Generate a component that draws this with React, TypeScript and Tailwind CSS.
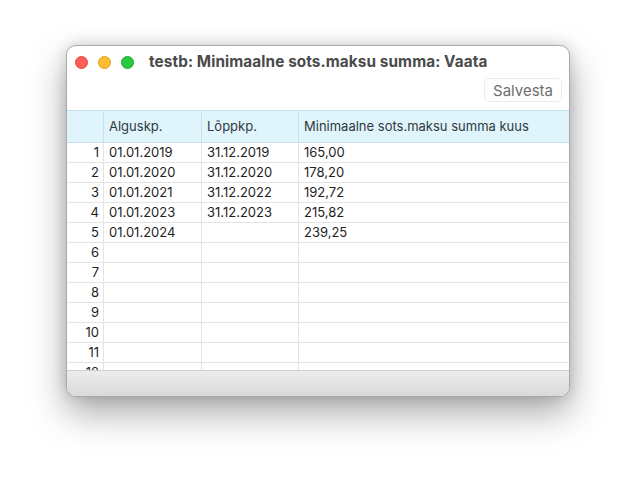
import React from "react";

const rows: [string, string, string][] = [
  ["01.01.2019", "31.12.2019", "165,00"],
  ["01.01.2020", "31.12.2020", "178,20"],
  ["01.01.2021", "31.12.2022", "192,72"],
  ["01.01.2023", "31.12.2023", "215,82"],
  ["01.01.2024", "", "239,25"],
  ["", "", ""],
  ["", "", ""],
  ["", "", ""],
  ["", "", ""],
  ["", "", ""],
  ["", "", ""],
  ["", "", ""],
];

export default function App() {
  return (
    <div
      className="w-[636px] h-[484px] bg-white pt-[45px] pl-[66px]"
      style={{ fontFamily: "Inter, 'Liberation Sans', sans-serif" }}
    >
      <div className="w-[504px] h-[352px] rounded-[10px] bg-white overflow-hidden flex flex-col border border-[#a9a9a9] shadow-[0_16px_36px_rgba(0,0,0,0.34),0_0_14px_rgba(0,0,0,0.14)]">
        {/* title bar */}
        <div className="h-[32px] flex items-center pl-[8px] shrink-0">
          <div className="flex items-center gap-[10px]">
            <span className="w-[13px] h-[13px] rounded-full bg-[#fe5f57] border border-[#e2463f]" />
            <span className="w-[13px] h-[13px] rounded-full bg-[#febc2e] border border-[#dea123]" />
            <span className="w-[13px] h-[13px] rounded-full bg-[#28c840] border border-[#1aab29]" />
          </div>
          <div className="ml-[15px] text-[15.3px] font-bold text-[#4a4a4a] tracking-[0.1px]">
            testb: Minimaalne sots.maksu summa: Vaata
          </div>
        </div>
        {/* toolbar */}
        <div className="h-[32px] flex items-start justify-end pr-[7px] shrink-0">
          <button className="h-[24px] px-[8px] rounded-[5px] border border-[#ececec] bg-white text-[15px] text-[#6e6e6e] leading-none">
            Salvesta
          </button>
        </div>
        {/* table */}
        <div className="h-[260px] overflow-hidden shrink-0">
          <div className="flex h-[33px] bg-[#e0f4fc] border-t border-b border-[#c6e1ea] text-[13px] text-[#2f3a3e]">
            <div className="w-[37px] border-r border-[#c9e2ea]" />
            <div className="w-[98px] border-r border-[#c9e2ea] pl-[5px] flex items-center">Alguskp.</div>
            <div className="w-[97px] border-r border-[#c9e2ea] pl-[5px] flex items-center">Lõppkp.</div>
            <div className="flex-1 pl-[5px] flex items-center">Minimaalne sots.maksu summa kuus</div>
          </div>
          {rows.map((r, i) => (
            <div key={i} className="flex h-[20px] border-b border-[#e4e4e4] text-[13px] text-[#1e1e1e]">
              <div className="w-[37px] border-r border-[#e4e4e4] pr-[4px] flex items-center justify-end">{i + 1}</div>
              <div className="w-[98px] border-r border-[#e4e4e4] pl-[5px] flex items-center">{r[0]}</div>
              <div className="w-[97px] border-r border-[#e4e4e4] pl-[5px] flex items-center">{r[1]}</div>
              <div className="flex-1 pl-[5px] flex items-center">{r[2]}</div>
            </div>
          ))}
        </div>
        {/* bottom bar */}
        <div className="flex-1 border-t border-[#cfcfcf] bg-gradient-to-b from-[#ececec] to-[#d9d9d9]" />
      </div>
    </div>
  );
}
